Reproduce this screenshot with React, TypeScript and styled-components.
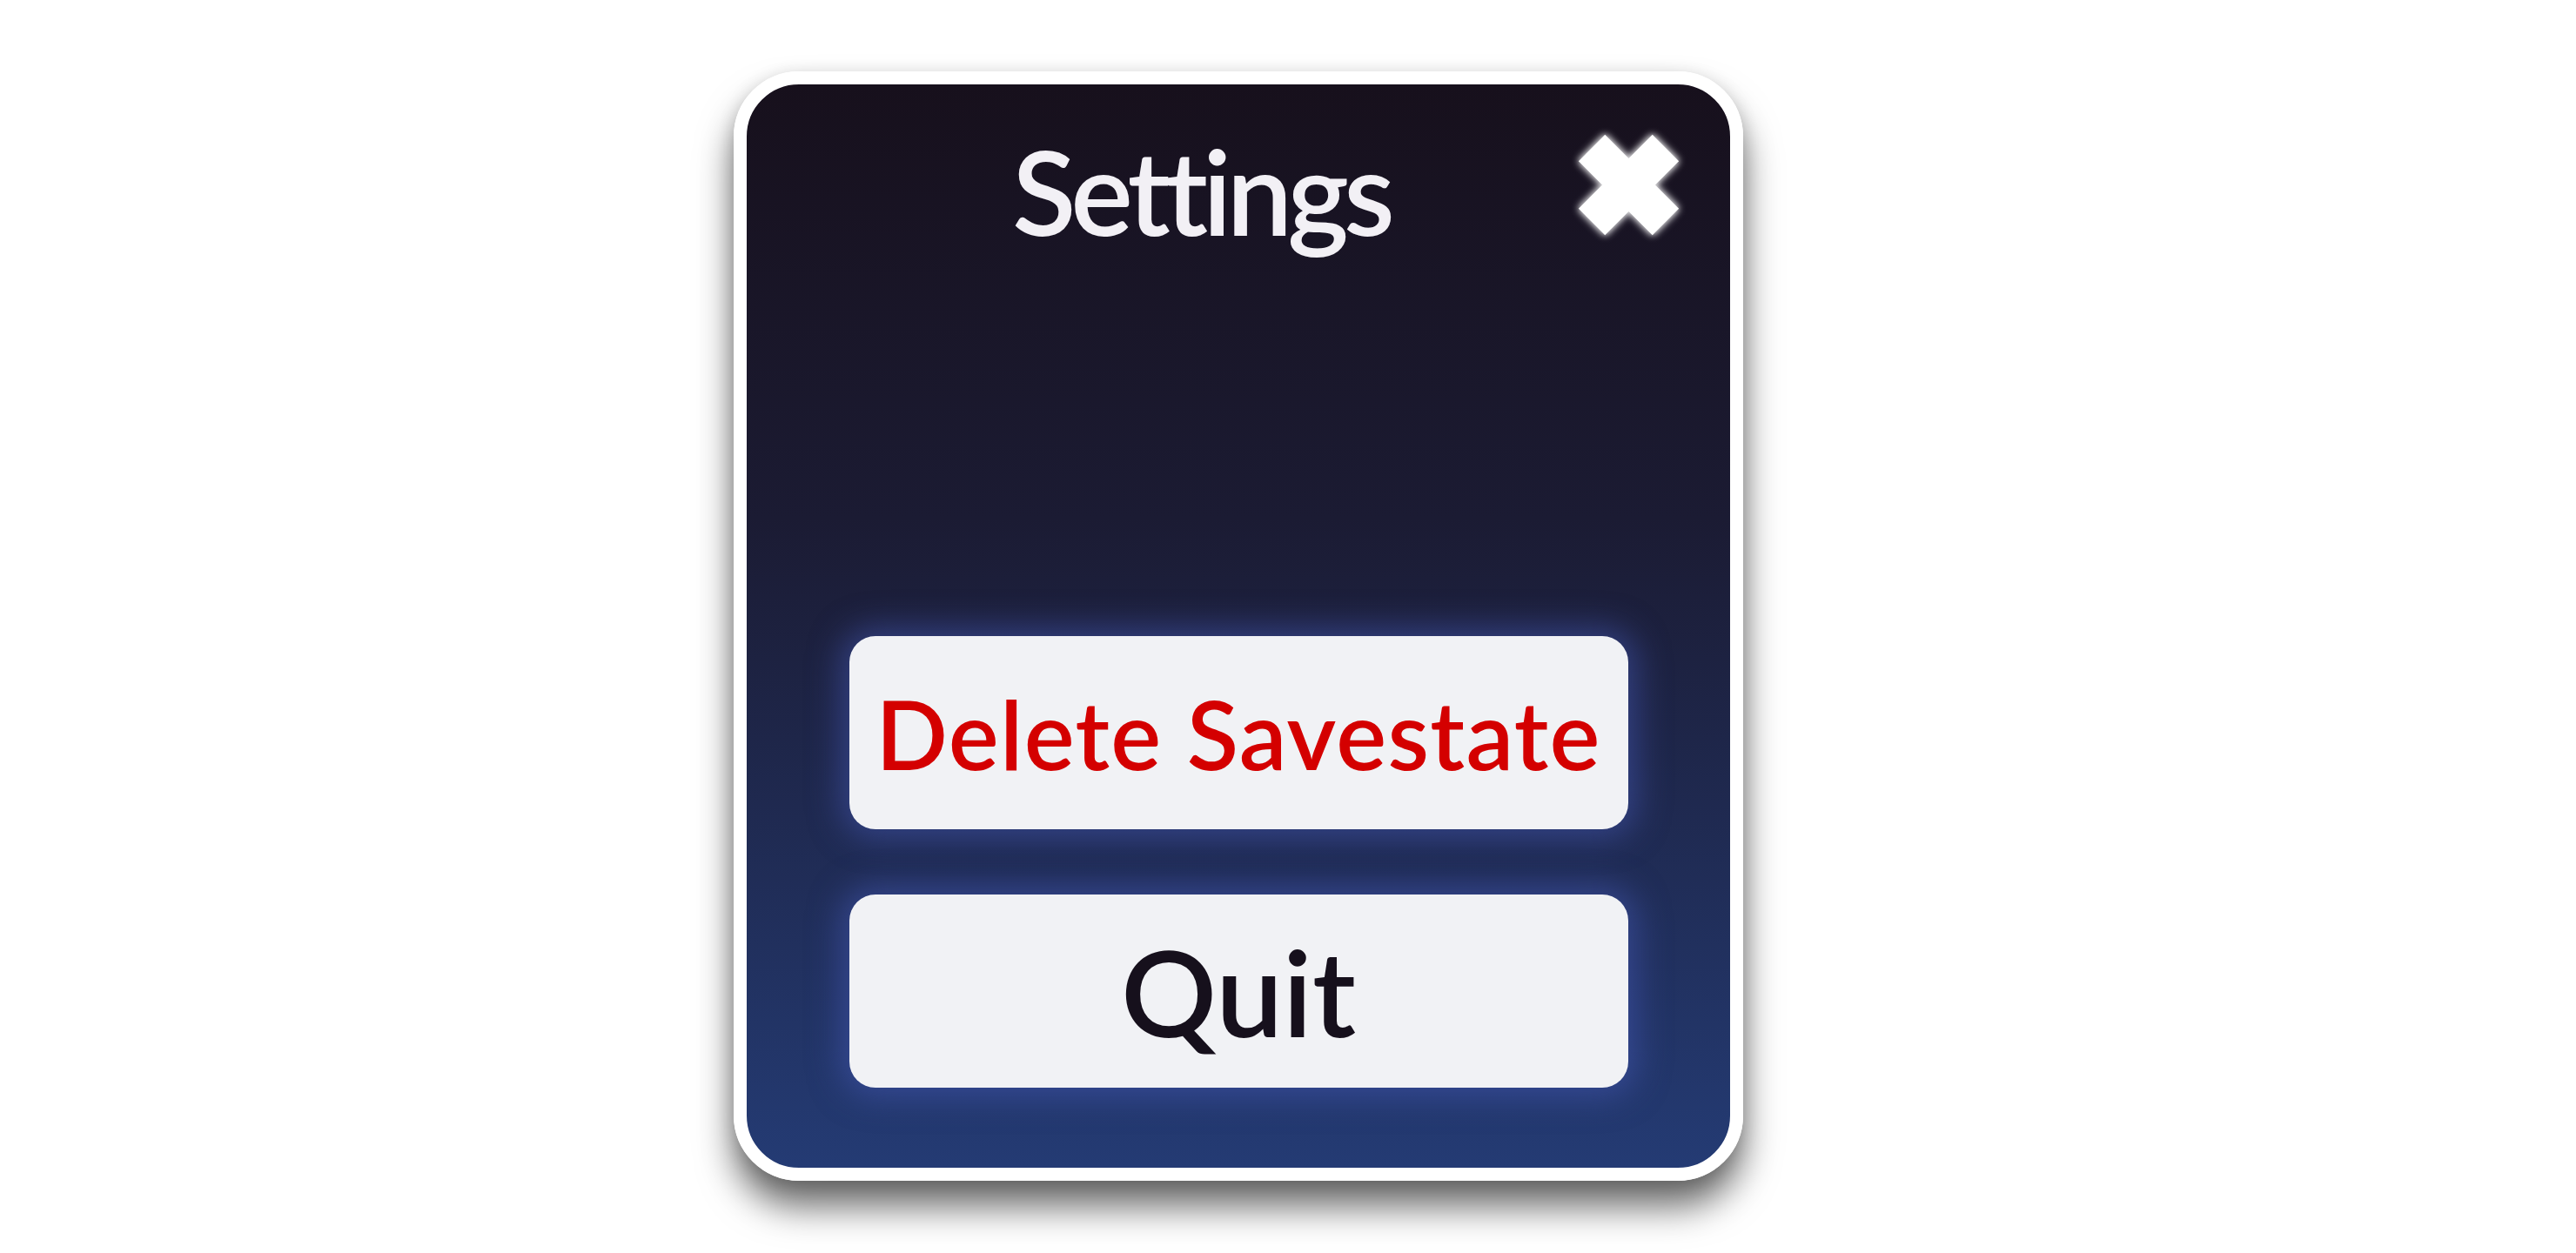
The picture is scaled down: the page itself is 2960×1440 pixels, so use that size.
import React from "react";
import styled, { createGlobalStyle } from "styled-components";

const GlobalStyle = createGlobalStyle`
  html, body {
    margin: 0;
    padding: 0;
    background: #ffffff;
  }
  * { box-sizing: border-box; }
`;

const Page = styled.div`
  width: 2960px;
  height: 1440px;
  padding: 82px 0 0 843px;
  background: #ffffff;
  font-family: Lato, "Noto Sans", "Liberation Sans", sans-serif;
`;

const Panel = styled.section`
  width: 1160px;
  height: 1275px;
  border: 15px solid #ffffff;
  border-radius: 75px;
  background: linear-gradient(180deg, #17101c 0%, #1b1b33 40%, #243b74 100%);
  box-shadow: 0 30px 42px rgba(0, 0, 0, 0.58), 0 4px 20px rgba(0, 0, 0, 0.14);
  display: flex;
  flex-direction: column;
`;

const Header = styled.header`
  display: flex;
  align-items: flex-start;
  padding: 55px 58px 0 89px;
`;

const Title = styled.h1`
  flex: 1;
  margin: 0;
  text-align: center;
  font-family: Lato, "Noto Sans", sans-serif;
  font-weight: 600;
  font-size: 135px;
  line-height: 1;
  letter-spacing: -6px;
  color: #f2f0f5;
`;

const CloseButton = styled.button`
  margin-top: 2px;
  width: 117px;
  height: 117px;
  padding: 0;
  border: none;
  background: transparent;
  cursor: pointer;
  display: flex;
  filter: drop-shadow(0 0 4px rgba(255, 255, 255, 0.9)) drop-shadow(0 0 3px rgba(255, 255, 255, 0.5));
  svg {
    display: block;
  }
`;

const ButtonStack = styled.div`
  margin-top: auto;
  padding-bottom: 92px;
  display: flex;
  flex-direction: column;
  align-items: center;
  gap: 75px;
`;

const MenuButton = styled.button<{ $danger?: boolean; $size: number; $tracking: number }>`
  width: 895px;
  height: 222px;
  border: none;
  border-radius: 30px;
  background: #f1f2f5;
  box-shadow: 0 0 36px 10px rgba(72, 92, 188, 0.5);
  display: flex;
  align-items: center;
  justify-content: center;
  font-family: Lato, "Noto Sans", sans-serif;
  font-weight: 600;
  font-size: ${(p) => p.$size}px;
  letter-spacing: ${(p) => p.$tracking}px;
  line-height: 1;
  color: ${(p) => (p.$danger ? "#d40000" : "#16101c")};
  cursor: pointer;
`;

const CrossIcon = () => (
  <svg width="117" height="117" viewBox="0 0 117 117">
    <rect x="-1.5" y="37" width="120" height="43" fill="#ffffff" transform="rotate(45 58.5 58.5)" />
    <rect x="-1.5" y="37" width="120" height="43" fill="#ffffff" transform="rotate(-45 58.5 58.5)" />
  </svg>
);

export default function App() {
  return (
    <>
      <GlobalStyle />
      <Page>
        <Panel>
          <Header>
            <Title>Settings</Title>
            <CloseButton aria-label="Close">
              <CrossIcon />
            </CloseButton>
          </Header>
          <ButtonStack>
            <MenuButton $danger $size={109} $tracking={1.3}>
              Delete Savestate
            </MenuButton>
            <MenuButton $size={137} $tracking={0}>
              Quit
            </MenuButton>
          </ButtonStack>
        </Panel>
      </Page>
    </>
  );
}
